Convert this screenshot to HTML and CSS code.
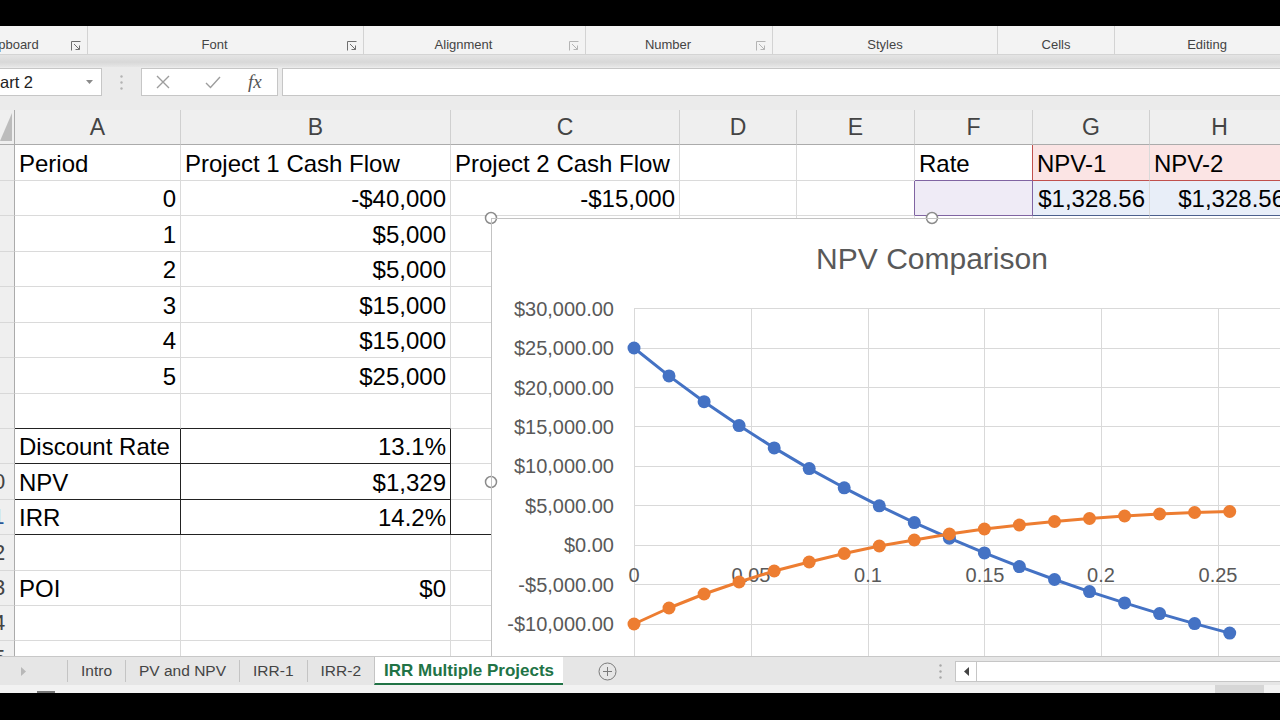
FILE: index.html
```html
<!DOCTYPE html>
<html lang="en">
<head>
  <meta charset="UTF-8">
  <meta name="viewport" content="width=device-width, initial-scale=1.0">
  <title>IRR Multiple Projects - Excel</title>
  <link rel="stylesheet" href="styles.css">
</head>
<body>
<div class="app">

  <!-- Ribbon group labels -->
  <div class="ribbon">
    <div class="group g-clipboard"><span class="label">ipboard</span>
      <svg class="launcher" viewBox="0 0 10 10"><path d="M0.5 9.5V0.5H9.5" /><path d="M3 3L8.5 8.5M8.5 4.5V8.5H4.5" /></svg></div>
    <div class="group g-font"><span class="label">Font</span>
      <svg class="launcher" viewBox="0 0 10 10"><path d="M0.5 9.5V0.5H9.5" /><path d="M3 3L8.5 8.5M8.5 4.5V8.5H4.5" /></svg></div>
    <div class="group g-align"><span class="label">Alignment</span>
      <svg class="launcher dim" viewBox="0 0 10 10"><path d="M0.5 9.5V0.5H9.5" /><path d="M3 3L8.5 8.5M8.5 4.5V8.5H4.5" /></svg></div>
    <div class="group g-number"><span class="label">Number</span>
      <svg class="launcher dim" viewBox="0 0 10 10"><path d="M0.5 9.5V0.5H9.5" /><path d="M3 3L8.5 8.5M8.5 4.5V8.5H4.5" /></svg></div>
    <div class="group plain g-styles"><span class="label">Styles</span></div>
    <div class="group plain g-cells"><span class="label">Cells</span></div>
    <div class="group plain g-editing"><span class="label">Editing</span></div>
  </div>
  <div class="ribbon-edge"></div>

  <!-- Formula bar -->
  <div class="formula-bar">
    <div class="namebox">
      <span>art 2</span>
      <svg width="7" height="4" viewBox="0 0 7 4"><path d="M0 0H7L3.5 4Z" fill="#8a8a8a" /></svg>
    </div>
    <div class="grip">
      <svg width="3" height="15" viewBox="0 0 3 15"><circle cx="1.5" cy="1.5" r="1.2" /><circle cx="1.5" cy="7.5" r="1.2" /><circle cx="1.5" cy="13.5" r="1.2" /></svg>
    </div>
    <div class="fx-buttons">
      <svg class="fx-cancel" width="14" height="14" viewBox="0 0 14 14"><path d="M1 1L13 13M13 1L1 13" /></svg>
      <svg class="fx-enter" width="16" height="14" viewBox="0 0 16 14"><path d="M1 8L5.5 12.5L15 2" /></svg>
      <span class="fx-fn">fx</span>
    </div>
    <div class="formula-input"></div>
  </div>
  <div class="gap"></div>

  <!-- Worksheet -->
  <div class="sheet">
    <div class="corner"><i></i></div>
    <div class="colhead">A</div>
    <div class="colhead">B</div>
    <div class="colhead">C</div>
    <div class="colhead">D</div>
    <div class="colhead">E</div>
    <div class="colhead">F</div>
    <div class="colhead">G</div>
    <div class="colhead">H</div>

    <div class="rowhead"><span>1</span></div>
    <div class="cell">Period</div>
    <div class="cell">Project 1 Cash Flow</div>
    <div class="cell">Project 2 Cash Flow</div>
    <div class="cell"></div>
    <div class="cell"></div>
    <div class="cell rate-head">Rate</div>
    <div class="cell name-range">NPV-1</div>
    <div class="cell name-range">NPV-2</div>

    <div class="rowhead"><span>2</span></div>
    <div class="cell num">0</div>
    <div class="cell num">-$40,000</div>
    <div class="cell num">-$15,000</div>
    <div class="cell"></div>
    <div class="cell x-left"></div>
    <div class="cell x-range"></div>
    <div class="cell num y-range">$1,328.56</div>
    <div class="cell num y-range">$1,328.56</div>

    <div class="rowhead"><span>3</span></div>
    <div class="cell num">1</div>
    <div class="cell num">$5,000</div>
    <div class="cell"></div><div class="cell"></div><div class="cell"></div><div class="cell"></div><div class="cell"></div><div class="cell"></div>

    <div class="rowhead"><span>4</span></div>
    <div class="cell num">2</div>
    <div class="cell num">$5,000</div>
    <div class="cell"></div><div class="cell"></div><div class="cell"></div><div class="cell"></div><div class="cell"></div><div class="cell"></div>

    <div class="rowhead"><span>5</span></div>
    <div class="cell num">3</div>
    <div class="cell num">$15,000</div>
    <div class="cell"></div><div class="cell"></div><div class="cell"></div><div class="cell"></div><div class="cell"></div><div class="cell"></div>

    <div class="rowhead"><span>6</span></div>
    <div class="cell num">4</div>
    <div class="cell num">$15,000</div>
    <div class="cell"></div><div class="cell"></div><div class="cell"></div><div class="cell"></div><div class="cell"></div><div class="cell"></div>

    <div class="rowhead"><span>7</span></div>
    <div class="cell num">5</div>
    <div class="cell num">$25,000</div>
    <div class="cell"></div><div class="cell"></div><div class="cell"></div><div class="cell"></div><div class="cell"></div><div class="cell"></div>

    <div class="rowhead"><span>8</span></div>
    <div class="cell bb"></div>
    <div class="cell bb"></div>
    <div class="cell"></div><div class="cell"></div><div class="cell"></div><div class="cell"></div><div class="cell"></div><div class="cell"></div>

    <div class="rowhead"><span>9</span></div>
    <div class="cell bb br">Discount Rate</div>
    <div class="cell num bb br">13.1%</div>
    <div class="cell"></div><div class="cell"></div><div class="cell"></div><div class="cell"></div><div class="cell"></div><div class="cell"></div>

    <div class="rowhead"><span>10</span></div>
    <div class="cell bb br">NPV</div>
    <div class="cell num bb br">$1,329</div>
    <div class="cell"></div><div class="cell"></div><div class="cell"></div><div class="cell"></div><div class="cell"></div><div class="cell"></div>

    <div class="rowhead"><span class="picked">11</span></div>
    <div class="cell bb br">IRR</div>
    <div class="cell num bb br">14.2%</div>
    <div class="cell bb"></div><div class="cell"></div><div class="cell"></div><div class="cell"></div><div class="cell"></div><div class="cell"></div>

    <div class="rowhead"><span>12</span></div>
    <div class="cell"></div><div class="cell"></div><div class="cell"></div><div class="cell"></div><div class="cell"></div><div class="cell"></div><div class="cell"></div><div class="cell"></div>

    <div class="rowhead"><span>13</span></div>
    <div class="cell">POI</div>
    <div class="cell num">$0</div>
    <div class="cell"></div><div class="cell"></div><div class="cell"></div><div class="cell"></div><div class="cell"></div><div class="cell"></div>

    <div class="rowhead"><span>14</span></div>
    <div class="cell"></div><div class="cell"></div><div class="cell"></div><div class="cell"></div><div class="cell"></div><div class="cell"></div><div class="cell"></div><div class="cell"></div>

    <div class="rowhead"><span>15</span></div>
    <div class="cell"></div><div class="cell"></div><div class="cell"></div><div class="cell"></div><div class="cell"></div><div class="cell"></div><div class="cell"></div><div class="cell"></div>

    <!-- Embedded chart (floats over the cells) -->
    <div class="chart">
      <svg width="882" height="528" viewBox="491 218 882 528">
        <defs>
          <marker id="dot-blue" markerUnits="userSpaceOnUse" markerWidth="14" markerHeight="14" refX="7" refY="7">
            <circle cx="7" cy="7" r="6.5" fill="#4472c4" />
          </marker>
          <marker id="dot-orange" markerUnits="userSpaceOnUse" markerWidth="14" markerHeight="14" refX="7" refY="7">
            <circle cx="7" cy="7" r="6.5" fill="#ed7d31" />
          </marker>
        </defs>

        <text class="chart-title" x="932" y="269" text-anchor="middle">NPV Comparison</text>

        <path class="gridlines" d="M634 308.5H1345M634 348.5H1345M634 387.5H1345M634 426.5H1345M634 466.5H1345M634 505.5H1345M634 545.5H1345M634 584.5H1345M634 624.5H1345M634 663.5H1345M634.5 308V703M751.5 308V703M868.5 308V703M984.5 308V703M1101.5 308V703M1218.5 308V703M1335.5 308V703" />

        <g class="axis-label" text-anchor="end">
          <text x="614" y="315.5">$30,000.00</text>
          <text x="614" y="355">$25,000.00</text>
          <text x="614" y="394.5">$20,000.00</text>
          <text x="614" y="433.5">$15,000.00</text>
          <text x="614" y="473">$10,000.00</text>
          <text x="614" y="512.5">$5,000.00</text>
          <text x="614" y="552">$0.00</text>
          <text x="614" y="591.5">-$5,000.00</text>
          <text x="614" y="631">-$10,000.00</text>
        </g>
        <g class="axis-label" text-anchor="middle">
          <text x="634" y="582">0</text>
          <text x="751" y="582">0.05</text>
          <text x="868" y="582">0.1</text>
          <text x="985" y="582">0.15</text>
          <text x="1101" y="582">0.2</text>
          <text x="1218" y="582">0.25</text>
        </g>

        <polyline class="series-1" points="634,348 669,375.9 704.1,401.7 739.1,425.6 774.2,447.9 809.2,468.6 844.2,487.8 879.3,505.8 914.3,522.6 949.4,538.2 984.4,552.9 1019.4,566.6 1054.5,579.5 1089.5,591.6 1124.6,602.9 1159.6,613.6 1194.6,623.6 1229.7,633.1" />
        <polyline class="series-2" points="634,624 669,608 704.1,594 739.1,582 774.2,571 809.2,562 844.2,553.5 879.3,546 914.3,540 949.4,534 984.4,529 1019.4,525 1054.5,521.5 1089.5,518.5 1124.6,516 1159.6,514 1194.6,512.5 1229.7,511.5" />

        <g class="handles">
          <circle cx="491" cy="218" r="5.5" />
          <circle cx="932" cy="218" r="5.5" />
          <circle cx="491" cy="482" r="5.5" />
        </g>
      </svg>
    </div>
  </div>

  <!-- Sheet tabs + horizontal scroll -->
  <div class="tabbar">
    <div class="tab-nav"><svg width="5" height="9" viewBox="0 0 5 9"><path d="M0 0L5 4.5L0 9Z" fill="#b8b8b8" /></svg></div>
    <div class="tab">Intro</div>
    <div class="tab">PV and NPV</div>
    <div class="tab">IRR-1</div>
    <div class="tab">IRR-2</div>
    <div class="tab active">IRR Multiple Projects</div>
    <div class="new-sheet">
      <svg width="19" height="19" viewBox="0 0 19 19"><circle cx="9.5" cy="9.5" r="8.5" /><path d="M9.5 5V14M5 9.5H14" /></svg>
    </div>
    <div class="tab-spacer"></div>
    <div class="split-grip">
      <svg width="3" height="15" viewBox="0 0 3 15"><circle cx="1.5" cy="1.5" r="1.2" /><circle cx="1.5" cy="7.5" r="1.2" /><circle cx="1.5" cy="13.5" r="1.2" /></svg>
    </div>
    <div class="hscroll">
      <span class="hscroll-btn"><svg width="5" height="9" viewBox="0 0 5 9"><path d="M5 0L0 4.5L5 9Z" fill="#444" /></svg></span>
    </div>
  </div>
  <div class="statusbar">
    <span class="status-mark"></span>
    <span class="view-btn"></span>
  </div>

</div>
</body>
</html>
```

FILE: styles.css
```css
* {
  box-sizing: border-box;
}

body {
  margin: 0;
  width: 1280px;
  height: 720px;
  overflow: hidden;
  background-color: #000;
  font-family: "Liberation Sans", Arial, sans-serif;
  color: #000;
}

.app {
  margin-top: 26px;
  height: 667px;
  display: flex;
  flex-direction: column;
  background-color: #ebebeb;
  overflow: hidden;
}


/* Ribbon */
.ribbon {
  flex: 0 0 28px;
  display: flex;
  margin-left: -31px;
  background-color: #f3f3f3;
}

.group {
  flex: 0 0 auto;
  display: grid;
  grid-template-columns: 1fr 22px;
  align-items: end;
  justify-items: center;
  padding-bottom: 1px;
  border-right: 1px solid #d3d3d3;
  font-size: 13px;
  color: #444;
}

.group.plain {
  grid-template-columns: 1fr;
}

.group .label {
  line-height: 16px;
}

.launcher {
  width: 10px;
  height: 10px;
  margin-bottom: 2px;
  fill: none;
  stroke: #6f6f6f;
  stroke-width: 1;
}

.launcher.dim {
  stroke: #b4b4b4;
}

.g-clipboard { width: 119px; }
.g-font { width: 276px; }
.g-align { width: 222px; }
.g-number { width: 187px; }
.g-styles { width: 225px; }
.g-cells { width: 117px; }
.g-editing { width: 185px; }

.ribbon-edge {
  flex: 0 0 13px;
  border-top: 1px solid #d4d4d4;
  background: linear-gradient(#e4e4e4, #d8d8d8 60%, #e6e6e6);
}


/* Formula bar */
.formula-bar {
  flex: 0 0 30px;
  display: flex;
  align-items: center;
}

.namebox {
  width: 102px;
  height: 28px;
  display: flex;
  align-items: center;
  justify-content: space-between;
  padding-right: 8px;
  background-color: #fff;
  border: 1px solid #c6c6c6;
  border-left: 0;
  font-size: 16.5px;
  color: #222;
}

.grip {
  width: 39px;
  display: flex;
  justify-content: center;
  fill: #b3b3b3;
}

.fx-buttons {
  width: 137px;
  height: 28px;
  display: flex;
  align-items: center;
  background-color: #fff;
  border: 1px solid #c6c6c6;
}

.fx-buttons svg {
  fill: none;
  stroke: #9d9d9d;
  stroke-width: 1.4;
}

.fx-cancel { margin-left: 14px; }
.fx-enter { margin-left: 35px; }

.fx-fn {
  margin-left: 27px;
  font-family: "Liberation Serif", "Times New Roman", serif;
  font-style: italic;
  font-size: 19px;
  color: #555;
}

.formula-input {
  flex: 1;
  height: 28px;
  margin-left: 4px;
  background-color: #fff;
  border: 1px solid #c6c6c6;
  border-right: 0;
}

.gap {
  flex: 0 0 13px;
}


/* Worksheet grid */
.sheet {
  flex: 0 0 546px;
  position: relative;
  overflow: hidden;
  display: grid;
  grid-template-columns: 15px 166px 270px 229px 117px 118px 118px 117px 140px;
  grid-template-rows: 35px 36px 35px 36px 35px 36px 35px 36px 35px 35px 36px 35px 36px 35px 35px 35px;
  background-color: #fff;
}

.corner {
  display: flex;
  align-items: flex-end;
  justify-content: flex-end;
  padding: 0 2px 3px 0;
  background-color: #efefef;
  border-right: 1px solid #ababab;
  border-bottom: 1px solid #ababab;
}

.corner i {
  width: 13px;
  height: 28px;
  background-color: #bcbcbc;
  clip-path: polygon(100% 0, 100% 100%, 0 100%);
}

.colhead {
  display: flex;
  align-items: center;
  justify-content: center;
  background-color: #efefef;
  border-right: 1px solid #d0d0d0;
  border-bottom: 1px solid #ababab;
  font-size: 23px;
  color: #444;
}

.rowhead {
  display: flex;
  align-items: center;
  justify-content: flex-end;
  overflow: hidden;
  background-color: #efefef;
  border-right: 1px solid #ababab;
  border-bottom: 1px solid #d8d8d8;
  font-size: 22px;
  color: #444;
}

.rowhead span {
  flex: 0 0 42px;
  text-align: center;
}

.rowhead .picked {
  color: #2b5797;
}

.cell {
  display: flex;
  align-items: center;
  min-width: 0;
  padding: 2px 4px 0;
  white-space: nowrap;
  border-right: 1px solid #dadada;
  border-bottom: 1px solid #dadada;
  font-size: 24px;
}

.num {
  justify-content: flex-end;
}

.bb { border-bottom-color: #222; }
.br { border-right-color: #222; }

/* chart source range highlights */
.rate-head {
  border-right-color: #c0504d;
  border-bottom-color: #8064a2;
}

.name-range {
  background-color: #fbe4e4;
  border-bottom-color: #c0504d;
}

.x-left {
  border-right-color: #8064a2;
}

.x-range {
  background-color: #efebf6;
  border-right-color: #8064a2;
  border-bottom-color: #8064a2;
}

.y-range {
  background-color: #e8eef8;
  border-bottom-color: #4b5f8c;
}


/* Chart */
.chart {
  position: absolute;
  left: 491px;
  top: 108px;
  width: 882px;
  height: 528px;
  background-color: #fff;
  outline: 1px solid #c3c3c3;
  outline-offset: -1px;
}

.chart svg {
  display: block;
  overflow: visible;
}

.chart text {
  font-family: "Liberation Sans", Arial, sans-serif;
  fill: #595959;
}

.chart-title {
  font-size: 30px;
}

.axis-label {
  font-size: 20px;
}

.gridlines {
  fill: none;
  stroke: #d9d9d9;
  stroke-width: 1;
}

.series-1,
.series-2 {
  fill: none;
  stroke-width: 3;
  stroke-linejoin: round;
}

.series-1 {
  stroke: #4472c4;
  marker-start: url(#dot-blue);
  marker-mid: url(#dot-blue);
  marker-end: url(#dot-blue);
}

.series-2 {
  stroke: #ed7d31;
  marker-start: url(#dot-orange);
  marker-mid: url(#dot-orange);
  marker-end: url(#dot-orange);
}

.handles circle {
  fill: #fff;
  stroke: #8c8c8c;
  stroke-width: 1.5;
}


/* Sheet tabs */
.tabbar {
  flex: 0 0 29px;
  display: flex;
  background-color: #e6e6e6;
  border-top: 1px solid #c8c8c8;
  font-size: 15.5px;
  color: #444;
}

.tab-nav {
  width: 67px;
  display: flex;
  align-items: center;
  padding-left: 21px;
}

.tab {
  display: flex;
  align-items: center;
  margin: 3px 0;
  padding: 0 13px;
  border-left: 1px solid #c4c4c4;
  white-space: nowrap;
}

.tab.active {
  margin: 0;
  padding: 2px 9px 0;
  background-color: #fff;
  border-bottom: 2px solid #217346;
  color: #217346;
  font-weight: bold;
  font-size: 17px;
}

.new-sheet {
  display: flex;
  align-items: center;
  margin-left: 35px;
  fill: none;
  stroke: #7a7a7a;
  stroke-width: 1;
}

.tab-spacer {
  flex: 1;
}

.split-grip {
  width: 30px;
  display: flex;
  align-items: center;
  justify-content: center;
  fill: #a8a8a8;
}

.hscroll {
  flex: 0 0 325px;
  display: flex;
  margin: 4px 0 3px;
  background-color: #fff;
  border: 1px solid #c6c6c6;
  border-right: 0;
}

.hscroll-btn {
  width: 21px;
  display: flex;
  align-items: center;
  justify-content: center;
  border-right: 1px solid #c6c6c6;
}

.statusbar {
  flex: 1;
  display: flex;
  background-color: #f2f2f2;
}

.status-mark {
  width: 18px;
  height: 2px;
  margin: 6px 0 0 37px;
  background-color: #777;
}

.view-btn {
  width: 49px;
  margin-left: auto;
  margin-right: 16px;
  background-color: #d6d6d6;
}
```
